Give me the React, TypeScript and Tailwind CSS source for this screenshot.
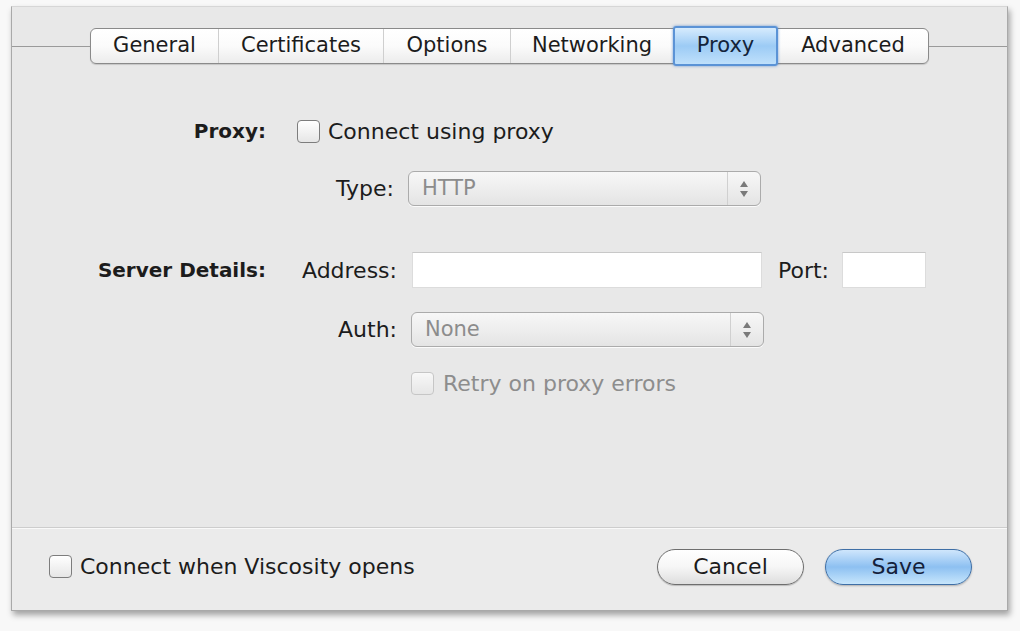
import React from 'react';

const FONT = 'font-["DejaVu_Sans",sans-serif]';

const tabs = [
  { label: 'General', w: 'w-[127px]' },
  { label: 'Certificates', w: 'w-[165px]' },
  { label: 'Options', w: 'w-[127px]' },
  { label: 'Networking', w: 'w-[163px]' },
  { label: 'Proxy', w: 'w-[105px]', active: true },
  { label: 'Advanced', w: 'w-[150px]' },
];

const Checkbox = ({ disabled }: { disabled?: boolean }) => (
  <div
    className={`w-[23px] h-[23px] shrink-0 rounded-[4px] border bg-gradient-to-b from-white to-[#e6e6e6] shadow-[inset_0_1px_1px_rgba(255,255,255,0.9)] ${
      disabled ? 'border-[#b8b8b8] opacity-70' : 'border-[#7d7d7d]'
    }`}
  />
);

const Stepper = () => (
  <div className="w-[33px] h-full border-l border-[#d0d0d0] flex items-center justify-center">
    <svg width="10" height="18" viewBox="0 0 10 18">
      <path d="M5 1 L9 7 L1 7 Z" fill="#7a7a7a" />
      <path d="M5 17 L9 11 L1 11 Z" fill="#7a7a7a" />
    </svg>
  </div>
);

const Select = ({ value, width }: { value: string; width: string }) => (
  <div
    className={`${width} h-[35px] rounded-[6px] border border-[#ababab] bg-gradient-to-b from-[#f7f7f7] via-[#eeeeee] to-[#e4e4e4] flex items-center justify-between shadow-[0_1px_0_rgba(255,255,255,0.8)]`}
  >
    <span className="pl-[13px] text-[21px] text-[#8c8c8c]">{value}</span>
    <Stepper />
  </div>
);

export default function App() {
  return (
    <div className={`w-[1020px] h-[631px] bg-[#f8f8f8] pt-[6px] pl-[11px] ${FONT} text-[#1c1c1c]`}>
      <div className="w-[997px] h-[605px] bg-[#e8e8e8] border-l border-r border-b border-[#a9a9a9] border-t-[#d6d6d6] border-t shadow-[2px_4px_6px_rgba(0,0,0,0.35)] flex flex-col">
        {/* Content */}
        <div className="flex-1 flex flex-col">
          {/* Tabs */}
          <div className="mt-[19px] flex items-center h-[40px]">
            <div className="flex-1 h-px bg-[#9a9a9a]" />
            <div className="flex h-[36px] rounded-[6px] border border-[#8a8a8a] bg-gradient-to-b from-white via-[#fbfbfb] to-[#ececec] shadow-[0_1px_1px_rgba(0,0,0,0.15)]">
              {tabs.map((t, i) =>
                t.active ? (
                  <div
                    key={t.label}
                    className={`${t.w} -my-[3px] h-[40px] flex items-center justify-center rounded-[3px] border-2 border-[#5b93d6] bg-gradient-to-b from-[#d6ebfd] via-[#9ccbf5] to-[#bfe0fb] shadow-[0_0_3px_rgba(60,120,200,0.7)] text-[21px] text-[#13233a]`}
                  >
                    {t.label}
                  </div>
                ) : (
                  <div
                    key={t.label}
                    className={`${t.w} h-full flex items-center justify-center text-[21px] ${
                      i > 0 && !tabs[i - 1].active ? 'border-l border-[#cfcfcf]' : ''
                    }`}
                  >
                    {t.label}
                  </div>
                )
              )}
            </div>
            <div className="flex-1 h-px bg-[#9a9a9a]" />
          </div>

          {/* Form */}
          <div className="mt-[53px] flex flex-col text-[22px]">
            <div className="flex items-center h-[24px]">
              <div className="w-[254px] text-right font-bold text-[20px]">Proxy:</div>
              <div className="ml-[31px] flex items-center gap-[8px]">
                <Checkbox />
                <span>Connect using proxy</span>
              </div>
            </div>

            <div className="mt-[28px] flex items-center h-[35px]">
              <div className="w-[254px]" />
              <div className="ml-[32px] w-[96px] text-right">Type:</div>
              <div className="ml-[14px]">
                <Select value="HTTP" width="w-[353px]" />
              </div>
            </div>

            <div className="mt-[46px] flex items-center h-[36px]">
              <div className="w-[254px] text-right font-bold text-[20px]">Server Details:</div>
              <div className="ml-[32px] w-[99px] text-right">Address:</div>
              <div className="ml-[15px] w-[350px] h-[36px] bg-white border border-[#dcdcdc] border-t-[#c8c8c8]" />
              <div className="ml-[16px]">Port:</div>
              <div className="ml-[13px] w-[84px] h-[36px] bg-white border border-[#dcdcdc] border-t-[#c8c8c8]" />
            </div>

            <div className="mt-[24px] flex items-center h-[35px]">
              <div className="w-[254px]" />
              <div className="ml-[32px] w-[99px] text-right">Auth:</div>
              <div className="ml-[14px]">
                <Select value="None" width="w-[353px]" />
              </div>
            </div>

            <div className="mt-[24px] flex items-center h-[24px]">
              <div className="w-[254px]" />
              <div className="ml-[145px] flex items-center gap-[9px] text-[#8d8d8d]">
                <Checkbox disabled />
                <span>Retry on proxy errors</span>
              </div>
            </div>
          </div>
        </div>

        {/* Footer */}
        <div className="h-[83px] border-t border-[#cdcdcd] bg-[#ebebeb] shadow-[inset_0_1px_0_rgba(255,255,255,0.7)] flex items-center pb-[5px] pl-[37px] pr-[35px]">
          <div className="flex items-center gap-[8px] text-[22px]">
            <Checkbox />
            <span>Connect when Viscosity opens</span>
          </div>
          <div className="ml-auto flex items-center gap-[21px]">
            <button className="w-[147px] h-[36px] rounded-full border border-[#6e6e6e] bg-gradient-to-b from-white via-[#f6f6f6] to-[#dedede] text-[22px] text-[#1c1c1c] shadow-[0_1px_1px_rgba(0,0,0,0.2)]">
              Cancel
            </button>
            <button className="w-[147px] h-[36px] rounded-full border border-[#3f6fa6] bg-gradient-to-b from-[#cfe6fc] via-[#8dc0f1] to-[#c7e6fc] text-[22px] text-[#14203a] shadow-[0_1px_2px_rgba(0,0,0,0.25)]">
              Save
            </button>
          </div>
        </div>
      </div>
    </div>
  );
}
